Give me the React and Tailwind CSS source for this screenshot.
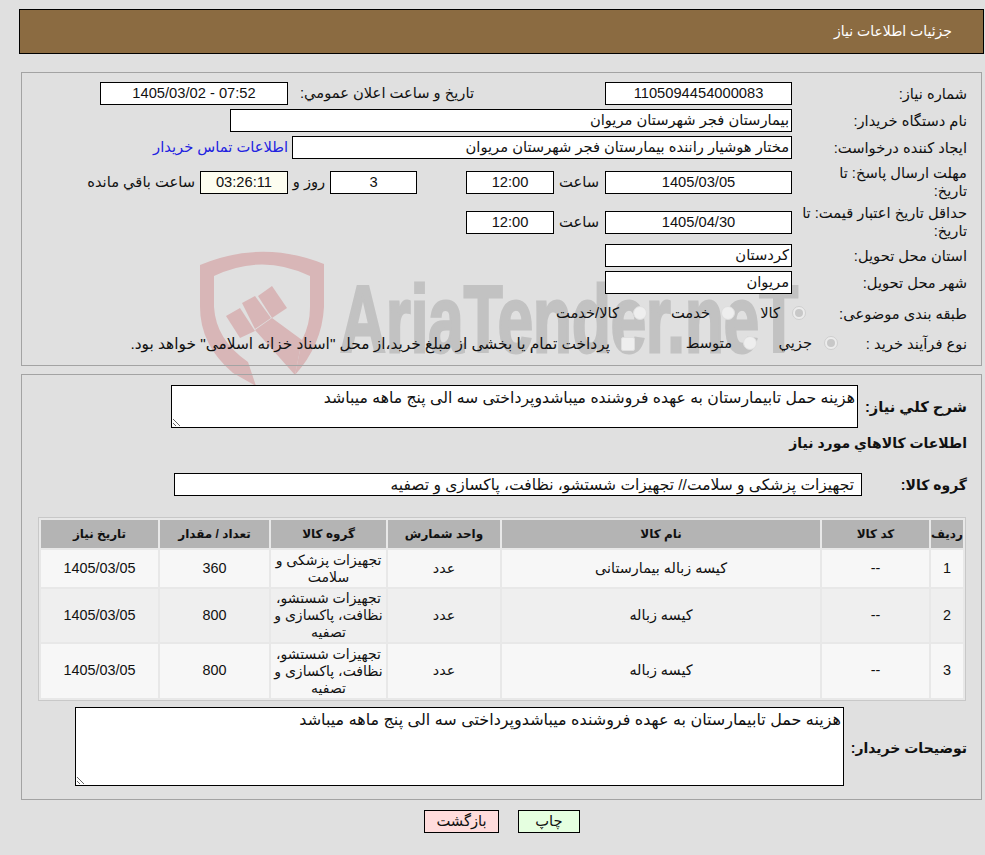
import React from "react";

const FONT = "font-['Tahoma','Liberation_Sans','DejaVu_Sans',sans-serif]";
const DESC = "هزینه حمل تابیمارستان به عهده فروشنده میباشدوپرداختی سه الی پنج ماهه میباشد";
const rows = [
  { id: 1, name: "کيسه زباله بيمارستانی", unit: "عدد", group: "تجهیزات پزشکی و سلامت", qty: "360", date: "1405/03/05", h: "h-[37px]" },
  { id: 2, name: "کيسه زباله", unit: "عدد", group: "تجهیزات شستشو، نظافت، پاکسازی و تصفیه", qty: "800", date: "1405/03/05", h: "h-[53px]" },
  { id: 3, name: "کيسه زباله", unit: "عدد", group: "تجهیزات شستشو، نظافت، پاکسازی و تصفیه", qty: "800", date: "1405/03/05", h: "h-[54px]" },
];

const Box = ({ className = "", children }) => (
  <div className={`h-[23px] border border-black bg-white flex items-center justify-center leading-none shrink-0 ${className}`}>
    {children}
  </div>
);

const Label = ({ className = "w-[175px]", children }) => (
  <div className={`shrink-0 leading-[18px] ${className}`}>{children}</div>
);

const Radio = ({ checked }) => (
  <span className={`w-[14px] h-[14px] rounded-full border flex items-center justify-center shrink-0 ${checked ? "bg-[#ececec] border-[#cfcfcf]" : "bg-[#eeeeee] border-[#dedede]"}`}>
    {checked && <span className="w-[8px] h-[8px] rounded-full bg-[#c8c8c8]" />}
  </span>
);

const App = () => {
  return (
    <div dir="rtl" className={`relative h-[855px] w-[985px] overflow-hidden bg-[#e0e0e0] text-[14.7px] text-[#111] ${FONT}`}>
      {/* watermark, sits behind the panels */}
      <svg className="absolute left-0 top-0 pointer-events-none" width="985" height="855" viewBox="0 0 985 855">
        <g fill="#d8b6b7">
          <path d="M200 265 Q262 239 324 264 L324 307 Q322 345 295 375 L302 340 Q310 325 310 307 L310 276 Q262 253 214 276 L214 307 Q216 340 248 362 L256 386 L233 373 Q200 345 200 307 Z" />
          <path d="M255 330 L272 318 L302 340 L295 375 Z" />
          <path d="M226 316 L240 308 L255 331 L240 338 Z" />
          <path d="M242 303 L255 296 L271 318 L255 329 Z" />
          <path d="M258 296 L272 286 L287 308 L272 318 Z" />
        </g>
        <text x="340" y="352" fontFamily="'Liberation Sans',sans-serif" fontWeight="700" fontSize="94" fill="#c2c2c2" stroke="#c2c2c2" strokeWidth="3" textLength="458" lengthAdjust="spacingAndGlyphs" direction="ltr">AriaTender.neT</text>
      </svg>

      <div className="relative">
        {/* header */}
        <div className="pt-[9px] pl-[19px] pr-px">
          <div className="h-[45px] border border-black bg-[#8b6b41] text-white flex items-center pr-[31px] text-[14px]">
            جزئیات اطلاعات نیاز
          </div>
        </div>

        {/* first panel */}
        <div className="mt-[18px] ml-[21px] mr-[3px] h-[294px] border border-[#a3a3a3] pt-[9px] pr-[14px]">
          <div className="flex items-center h-[23px]">
            <Label>شماره نیاز:</Label>
            <Box className="w-[187px]">1105094454000083</Box>
            <div className="w-[317px] pr-[131px] leading-none whitespace-nowrap">تاریخ و ساعت اعلان عمومي:</div>
            <Box className="w-[188px]"><span dir="ltr">1405/03/02 - 07:52</span></Box>
          </div>
          <div className="flex items-center h-[23px] mt-[4px]">
            <Label>نام دستگاه خریدار:</Label>
            <Box className="w-[562px] !justify-start pr-[2px]">بیمارستان فجر شهرستان مریوان</Box>
          </div>
          <div className="flex items-center h-[23px] mt-[4px]">
            <Label>ایجاد کننده درخواست:</Label>
            <Box className="w-[500px] !justify-start pr-[2px]">مختار هوشیار راننده بیمارستان فجر شهرستان مریوان</Box>
            <a className="mr-[4px] text-[#2222e0] leading-none whitespace-nowrap">اطلاعات تماس خریدار</a>
          </div>
          <div className="flex items-center h-[36px] mt-[5px]">
            <Label>مهلت ارسال پاسخ: تا<br />تاریخ:</Label>
            <Box className="w-[187px]">1405/03/05</Box>
            <div className="w-[51px] pr-[6px] leading-none">ساعت</div>
            <Box className="w-[88px]">12:00</Box>
            <div className="w-[49px]" />
            <Box className="w-[87px]">3</Box>
            <div className="w-[42px] text-center leading-none">روز و</div>
            <Box className="w-[88px] !bg-[#fdfdf0]">03:26:11</Box>
            <div className="mr-[5px] leading-none whitespace-nowrap">ساعت باقي مانده</div>
          </div>
          <div className="flex items-center h-[36px] mt-[4px]">
            <Label>حداقل تاریخ اعتبار قیمت: تا تاریخ:</Label>
            <Box className="w-[187px]">1405/04/30</Box>
            <div className="w-[51px] pr-[6px] leading-none">ساعت</div>
            <Box className="w-[88px]">12:00</Box>
          </div>
          <div className="flex items-center h-[23px] mt-[4px]">
            <Label>استان محل تحویل:</Label>
            <Box className="w-[187px] !justify-start pr-[2px]">کردستان</Box>
          </div>
          <div className="flex items-center h-[23px] mt-[4px]">
            <Label>شهر محل تحویل:</Label>
            <Box className="w-[187px] !justify-start pr-[2px]">مریوان</Box>
          </div>
          <div className="flex items-center h-[23px] mt-[8px]">
            <Label className="w-[161px]">طبقه بندی موضوعی:</Label>
            <div className="flex items-center w-[71px] gap-[12px] shrink-0"><Radio checked /><span>کالا</span></div>
            <div className="flex items-center w-[88px] gap-[11px] shrink-0"><Radio /><span>خدمت</span></div>
            <div className="flex items-center gap-[14px] whitespace-nowrap"><Radio /><span>کالا/خدمت</span></div>
          </div>
          <div className="flex items-center h-[23px] mt-[7px]">
            <Label className="w-[129px]">نوع فرآیند خرید :</Label>
            <div className="flex items-center w-[81px] gap-[12px] shrink-0"><Radio checked /><span>جزیي</span></div>
            <div className="flex items-center w-[122px] gap-[11px] shrink-0"><Radio /><span>متوسط</span></div>
            <div className="flex items-center gap-[11px] whitespace-nowrap text-[15.4px]">
              <span className="w-[14px] h-[14px] rounded-[2px] bg-[#eeeeee] border border-[#dedede] shrink-0" />
              <span>پرداخت تمام یا بخشی از مبلغ خرید،از محل "اسناد خزانه اسلامی" خواهد بود.</span>
            </div>
          </div>
        </div>

        {/* second panel */}
        <div className="mt-[8px] ml-[21px] mr-[3px] h-[426px] border border-[#a3a3a3] pt-[10px] pr-[14px]">
          <div className="flex items-start h-[43px]">
            <div className="w-[109px] shrink-0 font-bold text-[14.7px] leading-none pt-[15px] whitespace-nowrap">شرح کلي نیاز:</div>
            <textarea
              readOnly
              className="w-[687px] h-[43px] border border-black bg-white px-[2px] pt-[3px] text-[15.7px] leading-[18px] outline-none"
              defaultValue={DESC}
            />
          </div>
          <div className="font-bold text-[14px] leading-none mt-[8px]">اطلاعات کالاهاي مورد نیاز</div>
          <div className="flex items-center mt-[23px] h-[23px]">
            <div className="w-[105px] shrink-0 font-bold text-[14px] leading-none whitespace-nowrap">گروه کالا:</div>
            <Box className="w-[688px] !justify-start pr-[7px] text-[15.5px]">تجهیزات پزشکی و سلامت// تجهیزات شستشو، نظافت، پاکسازی و تصفیه</Box>
          </div>

          <table className="mt-[21px] mr-[1px] w-[928px] table-fixed border-separate border-spacing-[2px] border border-[#c8c8c8] bg-[#e8e8e8] text-center text-[14.4px]">
            <thead>
              <tr className="h-[28px] bg-[#b4b4b4] text-[12px]">
                <th className="w-[32px] font-bold">ردیف</th>
                <th className="w-[107px] font-bold">کد کالا</th>
                <th className="w-[318px] font-bold">نام کالا</th>
                <th className="w-[112px] font-bold">واحد شمارش</th>
                <th className="w-[115px] font-bold">گروه کالا</th>
                <th className="w-[109px] font-bold">تعداد / مقدار</th>
                <th className="font-bold">تاریخ نیاز</th>
              </tr>
            </thead>
            <tbody>
              {rows.map((r) => (
                <tr key={r.id} className={`${r.h} ${r.id % 2 ? "bg-[#f7f7f7]" : "bg-[#efefef]"}`}>
                  <td>{r.id}</td>
                  <td>--</td>
                  <td>{r.name}</td>
                  <td>{r.unit}</td>
                  <td className="leading-[17px] px-px text-[14px]">{r.group}</td>
                  <td>{r.qty}</td>
                  <td>{r.date}</td>
                </tr>
              ))}
            </tbody>
          </table>

          <div className="flex items-start mt-[6px]">
            <div className="w-[123px] shrink-0 font-bold text-[14px] leading-none pt-[34px] whitespace-nowrap">توضیحات خریدار:</div>
            <textarea
              readOnly
              className="w-[769px] h-[79px] border border-black bg-white px-[2px] pt-[3px] text-[16px] leading-[18px] outline-none"
              defaultValue={DESC}
            />
          </div>
        </div>

        {/* buttons */}
        <div className="flex gap-[19px] mt-[10px] pr-[405px]">
          <button className="w-[62px] h-[23px] border border-black bg-[#e5ffe0] leading-none">چاپ</button>
          <button className="w-[75px] h-[23px] border border-black bg-[#ffdcdc] leading-none">بازگشت</button>
        </div>
      </div>
    </div>
  );
};

export default App;
